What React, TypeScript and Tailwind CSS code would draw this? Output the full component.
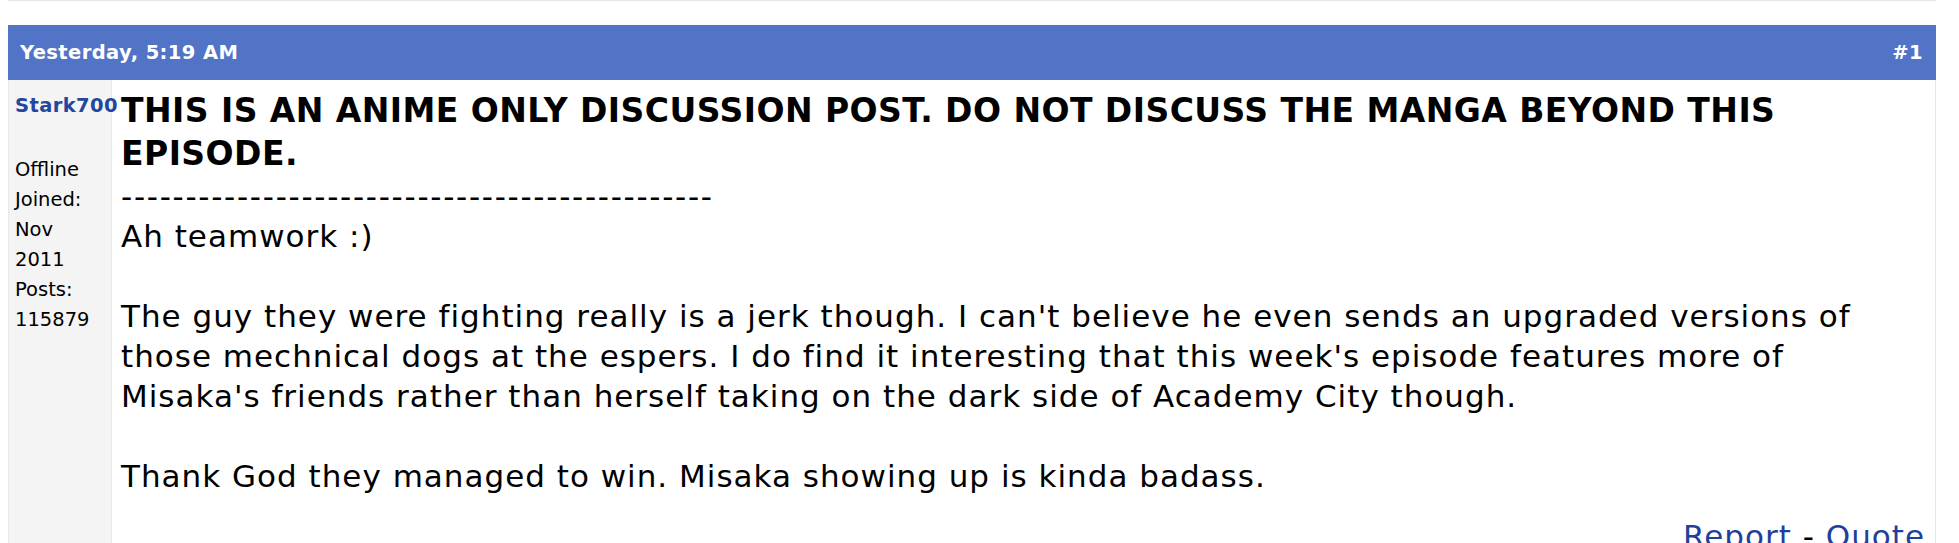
export default function App() {
  return (
    <div className="h-[543px] overflow-hidden bg-white font-['DejaVu_Sans',Verdana,sans-serif] text-black">
      <div className="ml-2 w-[1928px]">
        <div className="h-px bg-[#e6e6e6]" />

        <div className="mt-6 flex h-[55px] items-center justify-between bg-[#5174c7] pl-3 pr-[13px] text-[19.5px] font-bold tracking-[0.4px] text-white">
          <span>Yesterday, 5:19 AM</span>
          <span>#1</span>
        </div>

        <div className="flex h-[600px] border-r border-[#e6e6e6]">
          <div className="w-[104px] shrink-0 border-l border-r border-[#e8e8e8] bg-[#f4f4f4] pl-[6px] pt-[11px] text-[19.5px]">
            <div className="whitespace-nowrap font-bold leading-[30px] tracking-[0.4px] text-[#23479e]">Stark700</div>
            <div className="mt-[34px] leading-[30px]">
              Offline
              <br />
              Joined:
              <br />
              Nov
              <br />
              2011
              <br />
              Posts:
              <br />
              115879
            </div>
          </div>

          <div className="flex-1 whitespace-nowrap pl-[9px] pr-[10px] pt-[10px]">
            <div className="text-[33px] font-bold leading-[42.5px] tracking-[0.45px]">
              THIS IS AN ANIME ONLY DISCUSSION POST. DO NOT DISCUSS THE MANGA BEYOND THIS
              <br />
              EPISODE.
            </div>
            <div className="mt-[1px] text-[31px] leading-[40px] tracking-[1px]">
              <div className="tracking-[1.7px]">----------------------------------------------</div>
              <div>Ah teamwork :)</div>
              <br />
              <div>
                The guy they were fighting really is a jerk though. I can't believe he even sends an upgraded versions of
                <br />
                those mechnical dogs at the espers. I do find it interesting that this week's episode features more of
                <br />
                Misaka's friends rather than herself taking on the dark side of Academy City though.
              </div>
              <br />
              <div>Thank God they managed to win. Misaka showing up is kinda badass.</div>
            </div>
            <div className="mt-5 text-right text-[31px] leading-[40px] tracking-[1px]">
              <a className="text-[#1f3f9c]">Report</a> - <a className="text-[#1f3f9c]">Quote</a>
            </div>
          </div>
        </div>
      </div>
    </div>
  );
}
